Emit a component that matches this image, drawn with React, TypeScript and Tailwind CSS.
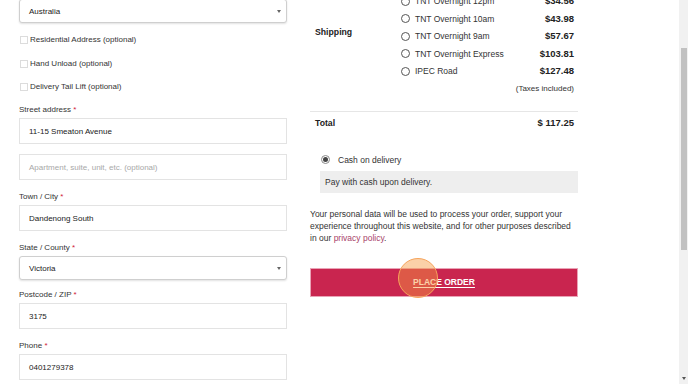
import React from "react";

function SelectBox({ value, className = "" }: { value: string; className?: string }) {
  return (
    <div
      className={`relative flex h-[24px] items-center rounded-[3px] border border-[#cfcfcf] bg-white pl-[9px] pt-[1px] text-[8px] text-[#222] shadow-[0_1px_2px_rgba(0,0,0,0.12)] ${className}`}
    >
      <span>{value}</span>
      <span className="absolute right-[5px] top-[10px] h-0 w-0 border-x-[2px] border-t-[3px] border-x-transparent border-t-[#666]" />
    </div>
  );
}

function TextInput({ value, placeholder }: { value?: string; placeholder?: string }) {
  return (
    <div className="flex h-[26px] items-center border border-[#e3e3e3] bg-white pl-[9px] pt-[1px] text-[8px]">
      {value ? (
        <span className="text-[#222]">{value}</span>
      ) : (
        <span className="text-[#a8a8a8]">{placeholder}</span>
      )}
    </div>
  );
}

function Label({ text }: { text: string }) {
  return (
    <div className="mb-[3px] h-[12px] pt-[1px] text-[8px] leading-[12px] text-[#333]">
      {text} <span className="text-[#d0213a]">*</span>
    </div>
  );
}

function Check({ text, className = "" }: { text: string; className?: string }) {
  return (
    <div className={`flex h-[16px] items-center pt-[1px] ${className}`}>
      <span className="ml-[1px] h-[8px] w-[8px] border border-[#dcdcdc] bg-white" />
      <span className="ml-[2px] text-[8px] text-[#333]">{text}</span>
    </div>
  );
}

function ShipRow({ name, price }: { name: string; price: string }) {
  return (
    <div className="flex h-[17.5px] items-center">
      <span className="ml-[2.5px] h-[9px] w-[9px] rounded-full border border-[#555] bg-white" />
      <span className="ml-[5.5px] flex-1 pt-[1px] text-[8.5px] text-[#333]">{name}</span>
      <span className="pt-[1px] text-[9.5px] font-bold text-[#222]">{price}</span>
    </div>
  );
}

export default function App() {
  return (
    <div className="flex h-[384px] w-[688px] overflow-hidden bg-white font-['Liberation_Sans',Arial,sans-serif]">
      <div className="flex flex-1 pl-[19px]">
        {/* Left column */}
        <div className="mt-[-1px] flex w-[268px] flex-col">
          <SelectBox value="Australia" />
          <Check text="Residential Address (optional)" className="mt-[8px]" />
          <Check text="Hand Unload (optional)" className="mt-[8px]" />
          <Check text="Delivery Tail Lift (optional)" className="mt-[7px]" />

          <div className="mt-[9px]">
            <Label text="Street address" />
            <TextInput value="11-15 Smeaton Avenue" />
          </div>
          <div className="mt-[10px]">
            <TextInput placeholder="Apartment, suite, unit, etc. (optional)" />
          </div>
          <div className="mt-[10px]">
            <Label text="Town / City" />
            <TextInput value="Dandenong South" />
          </div>
          <div className="mt-[10px]">
            <Label text="State / County" />
            <SelectBox value="Victoria" />
          </div>
          <div className="mt-[8px]">
            <Label text="Postcode / ZIP" />
            <TextInput value="3175" />
          </div>
          <div className="mt-[10px]">
            <Label text="Phone" />
            <TextInput value="0401279378" />
          </div>
        </div>

        {/* Right column */}
        <div className="ml-[23px] mt-[-7.75px] flex w-[268px] flex-col">
          <div className="flex">
            <div className="w-[88px] pl-[5px] pt-[34px] text-[8.7px] font-bold leading-[12px] text-[#222]">
              Shipping
            </div>
            <div className="flex flex-1 flex-col pr-[4px]">
              <ShipRow name="TNT Overnight 12pm" price="$34.56" />
              <ShipRow name="TNT Overnight 10am" price="$43.98" />
              <ShipRow name="TNT Overnight 9am" price="$57.67" />
              <ShipRow name="TNT Overnight Express" price="$103.81" />
              <ShipRow name="IPEC Road" price="$127.48" />
              <div className="flex h-[18px] items-center justify-end pt-[1px] text-[8px] text-[#333]">
                (Taxes included)
              </div>
            </div>
          </div>

          <div className="mt-[13px] h-px bg-[#e6e6e6]" />
          <div className="flex h-[22px] items-center justify-between pl-[5px] pr-[4px] pt-[1px]">
            <span className="text-[8.7px] font-bold text-[#222]">Total</span>
            <span className="text-[9.5px] font-bold text-[#222]">$ 117.25</span>
          </div>

          <div className="mt-[18px] flex h-[16px] items-center">
            <span className="ml-[10.5px] flex h-[9px] w-[9px] items-center justify-center rounded-full border border-[#8a8a8a] bg-white">
              <span className="h-[5px] w-[5px] rounded-full bg-[#444]" />
            </span>
            <span className="ml-[8.5px] pt-[1px] text-[8.5px] text-[#333]">Cash on delivery</span>
          </div>
          <div className="ml-[10px] mt-[3px] flex h-[22px] items-center bg-[#eeeeee] pl-[5px] pt-[1px] text-[8.5px] text-[#333]">
            Pay with cash upon delivery.
          </div>

          <p className="mt-[15px] text-[8.5px] leading-[12px] text-[#333]">
            Your personal data will be used to process your order, support your experience throughout this
            website, and for other purposes described in our{" "}
            <span className="text-[#a8436a]">privacy policy</span>.
          </p>

          <div className="relative mt-[24px] flex h-[29px] items-center justify-center border border-[#e9a3b6] bg-[#c9254f]">
            <span className="pt-[1px] text-[8.5px] font-bold text-white underline underline-offset-[1.5px]">PLACE ORDER</span>
            <span className="absolute left-[87px] top-[-11px] h-[40px] w-[40px] rounded-full border-[1.5px] border-[#f6a45c] bg-[#f79a3e]/45" />
          </div>
        </div>
      </div>

      {/* Scrollbar */}
      <div className="relative flex w-[9px] flex-col bg-[#f1f1f1]">
        <div className="ml-[1.5px] mt-[48px] h-[202px] w-[6.5px] bg-[#c1c1c1]" />
        <span className="absolute bottom-[4px] left-[2.5px] h-0 w-0 border-x-[2px] border-t-[3px] border-x-transparent border-t-[#555]" />
      </div>
    </div>
  );
}
